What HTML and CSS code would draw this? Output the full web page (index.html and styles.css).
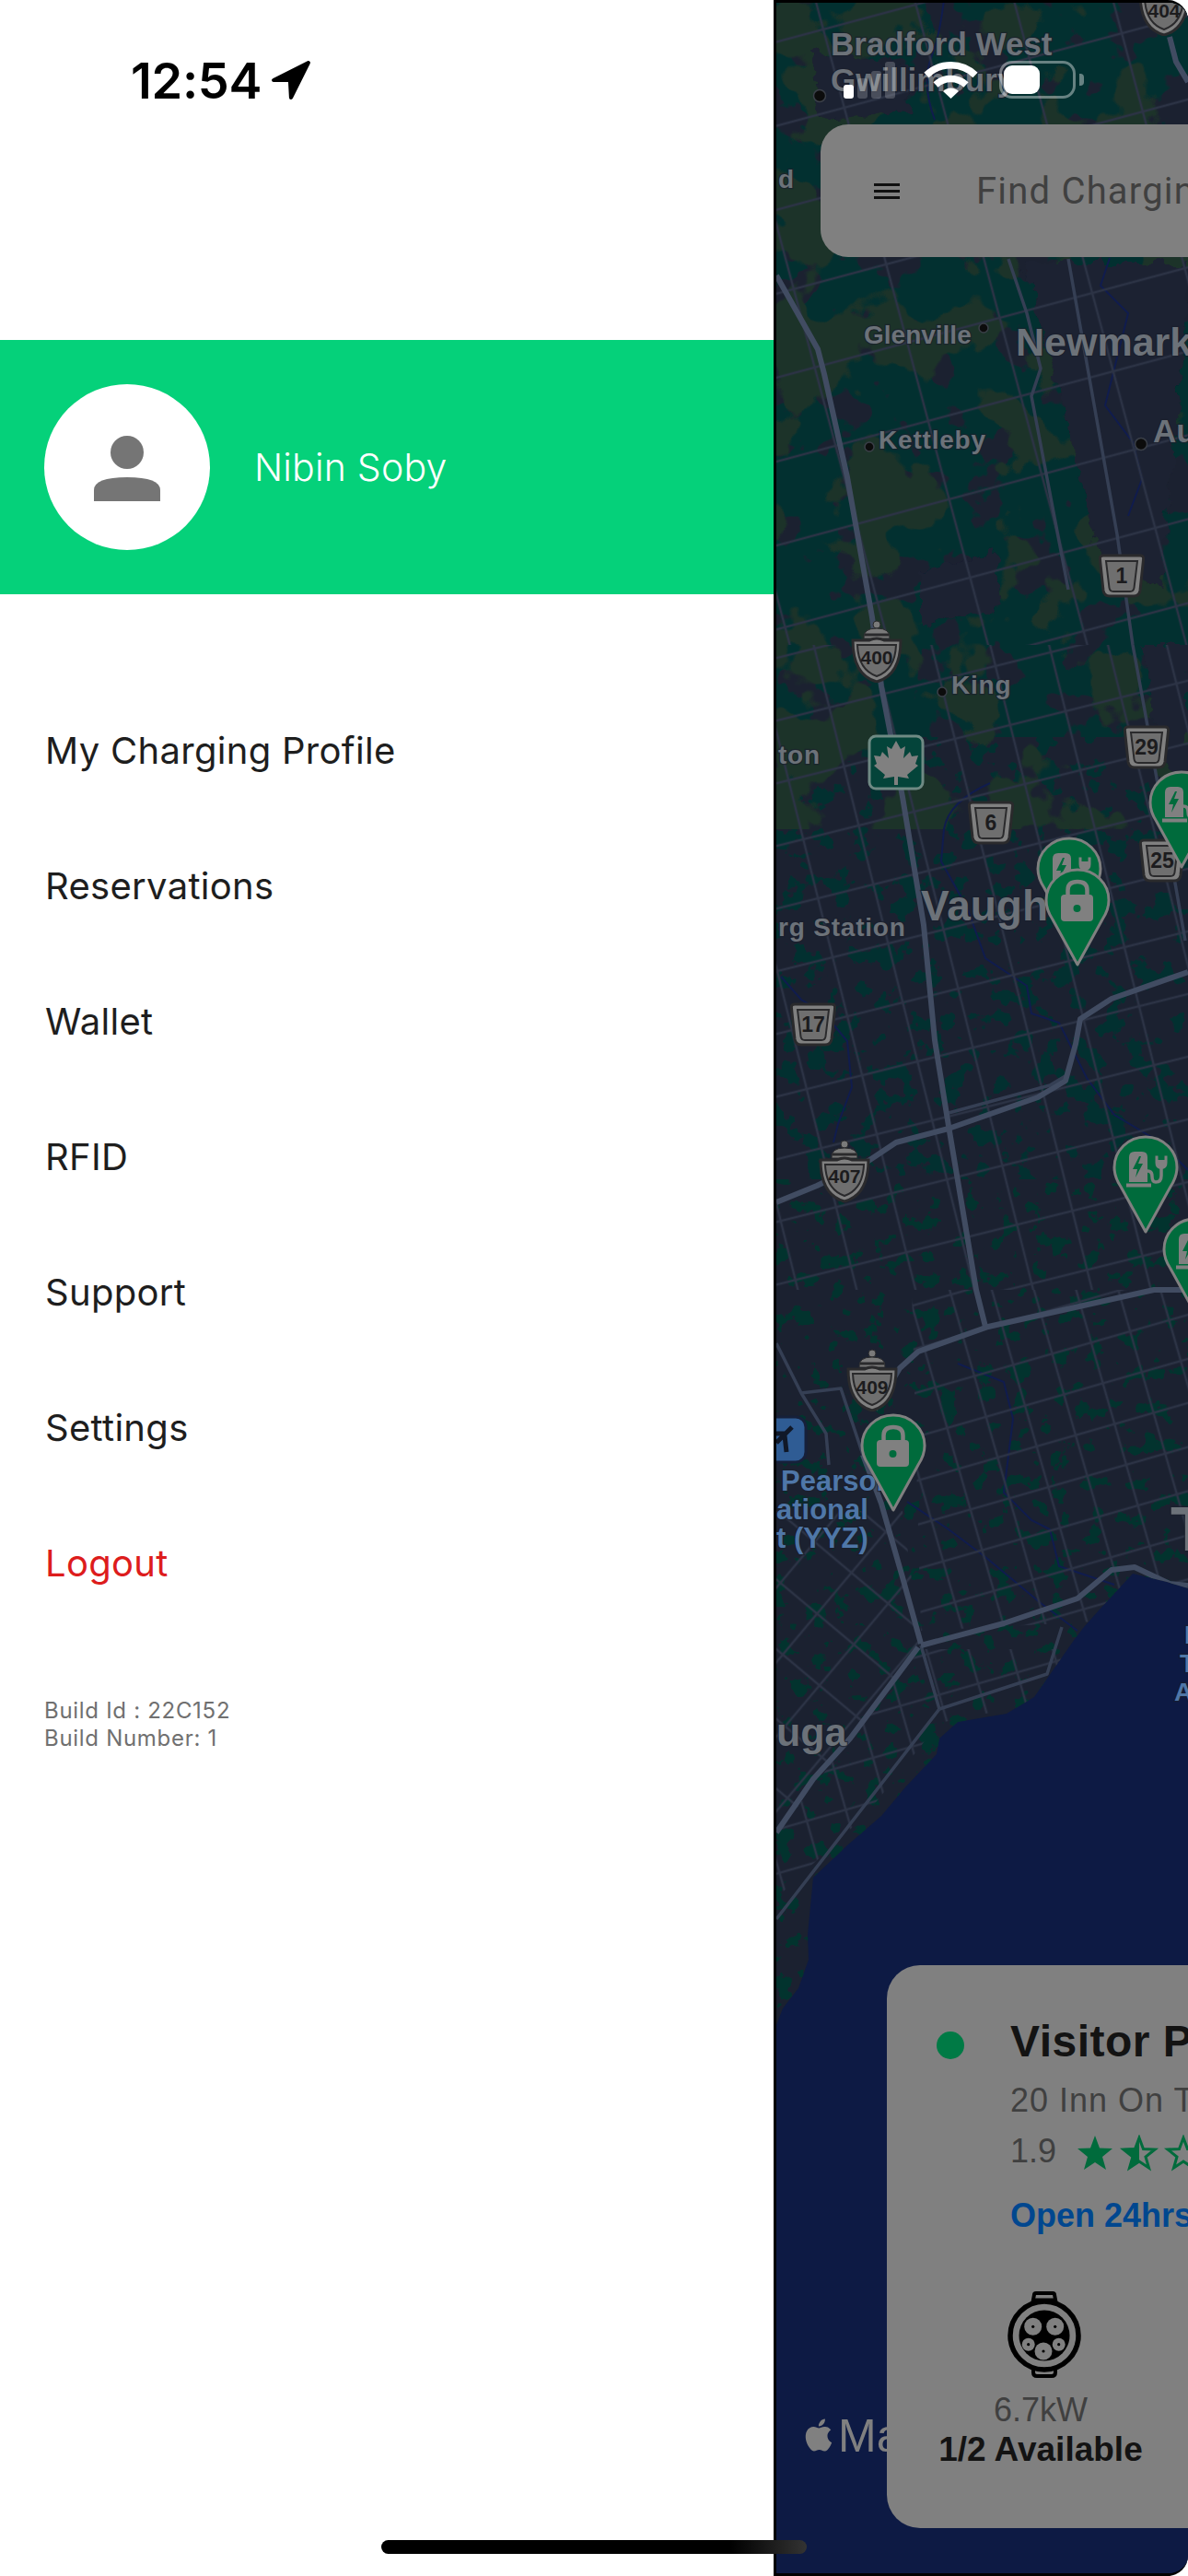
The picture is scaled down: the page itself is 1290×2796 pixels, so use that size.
FILE: index.html
```html
<!DOCTYPE html>
<html lang="en">
<head>
<meta charset="utf-8">
<title>Drawer</title>
<link rel="stylesheet" href="styles.css">
</head>
<body>
<div class="screen">
  <aside class="drawer">
    <div class="status-left">
      <span class="time">12:54</span>
      <svg class="loc" viewBox="0 0 42 42"><path d="M39 3 L3 21 L20 21 L21 39 Z"/></svg>
    </div>
    <header class="profile">
      <div class="avatar">
        <svg class="avatar-icon" viewBox="0 0 72 71"><ellipse cx="36" cy="18" rx="18" ry="18"/><path d="M0 71 V59 Q0 45 36 45 Q72 45 72 59 V71 Z"/></svg>
      </div>
      <span class="name">Nibin Soby</span>
    </header>
    <nav class="menu">
      <a class="item">My Charging Profile</a>
      <a class="item">Reservations</a>
      <a class="item">Wallet</a>
      <a class="item">RFID</a>
      <a class="item">Support</a>
      <a class="item">Settings</a>
      <a class="item logout">Logout</a>
    </nav>
    <div class="build">Build Id : 22C152<br>Build Number: 1</div>
  </aside>

  <main class="map">
    <svg class="map-art" viewBox="843 3 447 2790" preserveAspectRatio="none">
      <defs>
        <filter id="tealNorth" x="0" y="0" width="100%" height="100%" color-interpolation-filters="sRGB">
          <feTurbulence type="fractalNoise" baseFrequency="0.02" numOctaves="4" seed="7"/>
          <feColorMatrix values="0 0 0 0 0.008  0 0 0 0 0.19  0 0 0 0 0.19  30 0 0 0 -12"/>
        </filter>
        <filter id="tealMid" x="0" y="0" width="100%" height="100%" color-interpolation-filters="sRGB">
          <feTurbulence type="fractalNoise" baseFrequency="0.04" numOctaves="4" seed="7"/>
          <feColorMatrix values="0 0 0 0 0.008  0 0 0 0 0.19  0 0 0 0 0.19  30 0 0 0 -17.300"/>
        </filter>
        <filter id="tealSouth" x="0" y="0" width="100%" height="100%" color-interpolation-filters="sRGB">
          <feTurbulence type="fractalNoise" baseFrequency="0.05" numOctaves="4" seed="11"/>
          <feColorMatrix values="0 0 0 0 0.008  0 0 0 0 0.2  0 0 0 0 0.18  30 0 0 0 -18.300"/>
        </filter>
        <filter id="moss" x="0" y="0" width="100%" height="100%" color-interpolation-filters="sRGB">
          <feTurbulence type="fractalNoise" baseFrequency="0.012" numOctaves="4" seed="23"/>
          <feColorMatrix values="0 0 0 0 0.11  0 0 0 0 0.2  0 0 0 0 0.16  30 0 0 0 -16.200"/>
        </filter>
        <filter id="rough" x="-10%" y="-10%" width="120%" height="120%">
          <feTurbulence type="fractalNoise" baseFrequency="0.06" numOctaves="3" seed="3"/>
          <feDisplacementMap in="SourceGraphic" scale="22" xChannelSelector="R" yChannelSelector="G"/>
        </filter>
        <pattern id="gridA" width="104" height="88" patternUnits="userSpaceOnUse" patternTransform="rotate(-15 843 0)">
          <path d="M0 44 H104 M52 0 V88" class="grid-line"/>
        </pattern>
        <pattern id="gridB" width="62" height="66" patternUnits="userSpaceOnUse" patternTransform="rotate(-14 843 0)">
          <path d="M0 33 H62 M31 0 V66" class="grid-line"/>
        </pattern>
        <pattern id="gridC" width="44" height="46" patternUnits="userSpaceOnUse" patternTransform="rotate(-16 843 0)">
          <path d="M0 23 H44 M22 0 V46" class="grid-line"/>
        </pattern>
        <pattern id="gridD" width="52" height="58" patternUnits="userSpaceOnUse" patternTransform="rotate(40 843 1700)">
          <path d="M0 29 H52 M26 0 V58" class="grid-line"/>
        </pattern>
        <clipPath id="land"><path d="M843 0 H1290 V1724 L1267 1717 L1230 1708 L1193 1748 L1177 1766 L1167 1779 L1123 1842 L1093 1860 L1040 1869 L1020 1887 L1017 1904 L983 1940 L957 1971 L920 2003 L883 2038 L877 2100 L878 2127 L867 2158 L850 2180 L843 2198 Z"/></clipPath>

        <symbol id="prov" viewBox="0 0 52 48">
          <path d="M6 2 H46 Q50 2 49.600 6 L46 40 Q45 46 39 46 H13 Q7 46 6 40 L2.400 6 Q2 2 6 2Z" class="sign-face"/>
          <path d="M9 8 H43 L39.500 37 Q39 41 35 41 H17 Q13 41 12.500 37 Z" class="sign-inner"/>
        </symbol>
        <symbol id="crown" viewBox="0 0 56 68">
          <circle cx="28" cy="5" r="4" class="crown-fill"/>
          <path d="M14 20 Q13 9 28 9 Q43 9 42 20 Z" class="crown-fill"/>
          <path d="M15 16 H41" class="crown-line"/>
          <path d="M2 22 H20 Q24 20 28 20 Q32 20 36 22 H54 Q54 60 28 67 Q2 60 2 22Z" class="sign-face"/>
          <path d="M7 27 H49 Q48 54 28 61 Q8 54 7 27Z" class="sign-inner"/>
        </symbol>
        <symbol id="pin" viewBox="0 0 72 108">
          <path d="M36 2 C55 2 70 17 70 35 C70 43 67 50 63 56 L36 105 L9 56 C5 50 2 43 2 35 C2 17 17 2 36 2Z" class="pin-body"/>
        </symbol>
        <symbol id="pinCharge" viewBox="0 0 72 108">
          <use href="#pin"/>
          <path d="M18 24 Q18 18 24 18 H32 Q38 18 38 24 V51 H18 Z" class="pin-glyph"/>
          <path d="M15 52.500 H42 V56.500 H15 Z" class="pin-glyph"/>
          <path d="M29 23 L22 37 H27 L25 46 L33 31 H28 L31 23 Z" class="pin-bolt"/>
          <path d="M38 39 Q43 39 43 45 Q43 51 47 51 Q53 51 53 44 V36" class="pin-cable"/>
          <path d="M48 27 V22.500 M58 27 V22.500" class="pin-prong"/>
          <path d="M46.500 27 H59.500 V30 Q59.500 37 53 37 Q46.500 37 46.500 30 Z" class="pin-glyph"/>
        </symbol>
        <symbol id="pinLock" viewBox="0 0 72 108">
          <use href="#pin"/>
          <path d="M24 31 V24 Q24 15 34.500 15 Q45 15 45 24 V31" class="pin-shackle" transform="translate(1.500 0)"/>
          <rect x="18" y="29" width="35" height="29" rx="4" class="pin-glyph"/>
          <circle cx="35.500" cy="44" r="4" class="pin-bolt"/>
        </symbol>
      </defs>

      <rect x="843" y="0" width="447" height="2796" class="water"/>
      <g clip-path="url(#land)">
        <rect x="843" y="0" width="447" height="2200" class="urban"/>
        <rect x="843" y="0" width="447" height="800" filter="url(#tealNorth)"/>
        <rect x="843" y="800" width="447" height="480" filter="url(#tealMid)"/>
        <rect x="843" y="1280" width="447" height="920" filter="url(#tealSouth)"/>
        <rect x="843" y="0" width="447" height="900" filter="url(#moss)"/>
        <g filter="url(#rough)" class="urban">
          <path d="M880 55 L985 70 L990 125 L890 130 Z"/>
          <path d="M1110 285 H1290 V330 L1260 640 L1190 600 L1150 420 Z"/>
          <path d="M1000 620 L1080 600 L1090 660 L1000 680 Z"/>
          <path d="M1240 700 H1290 V850 L1260 820 Z"/>
        </g>

        <g class="river">
          <path d="M1025 0 Q1020 40 1012 60 Q1000 90 1015 130"/>
          <path d="M1205 280 L1195 310 L1225 340 L1200 440 L1230 480 L1240 520 L1225 560"/>
          <path d="M1075 850 Q1030 870 1025 900 L1022 935 L1050 985 L1070 1040 L1115 1070 L1120 1100 L1150 1110 L1180 1170 L1210 1210 L1260 1240 L1290 1270"/>
          <path d="M848 1060 L870 1085 L895 1100 L920 1130 L925 1180 L910 1220 L905 1240"/>
          <path d="M1040 1480 L1090 1500 L1100 1540 L1090 1620 L1120 1650 L1140 1660 L1150 1700 L1210 1720"/>
          <path d="M985 1630 L1030 1660 L1070 1690 L1130 1740 L1170 1770"/>
        </g>

        <rect x="843" y="0" width="447" height="700" fill="url(#gridA)"/>
        <rect x="843" y="700" width="447" height="700" fill="url(#gridB)"/>
        <path d="M990 1400 H1290 V1720 L1190 1760 L1000 1770 Z" fill="url(#gridC)"/>
        <path d="M843 1640 L980 1640 L1000 1790 L883 1940 L843 1990 Z" fill="url(#gridD)"/>
        <path d="M1000 1790 H1160 L1120 1850 L1020 1870 L940 1970 L843 2060 V1990 Z" fill="url(#gridC)"/>

        <g class="road-mid">
          <path d="M1160 281 L1213 580 L1230 700 L1243 771 L1287 1021"/>
          <path d="M1000 1786 L1020 1855 M1020 1855 L843 2083"/>
          <path d="M1020 1855 L1137 1817 L1153 1766"/>
          <path d="M1030 1208 L1140 1178 L1160 1166"/>
          <path d="M843 1458 L870 1512 L897 1556 L900 1590"/>
          <path d="M870 1512 L913 1507 L937 1579"/>
          <path d="M1095 281 L1115 340 L1130 400 L1120 430 L1160 640"/>
        </g>
        <g class="road-major">
          <path d="M843 299 L888 379 L895 406 L920 518 L947 670 L957 745 L980 865 L1003 1004 L1015 1129 L1030 1222 L1060 1400 L1070 1440"/>
          <path d="M1270 40 L1277 67 L1290 89"/>
          <path d="M1290 1400 L1253 1400 L1073 1440 L997 1467 L977 1485 L950 1530"/>
          <path d="M937 1579 L957 1632 L980 1712 L1000 1784"/>
          <path d="M1000 1786 L1090 1762 L1170 1735 L1207 1704 L1232 1701 L1270 1719 L1290 1721"/>
          <path d="M997 1788 L923 1887 L883 1931 L843 1989"/>
          <path d="M843 1305 L887 1287 L943 1260 L973 1240 L1030 1225 L1127 1191 L1157 1173 L1168 1133 L1173 1106 L1207 1084 L1290 1055"/>
        </g>
      </g>

      <g class="map-label">
        <text x="902" y="60" class="l34">Bradford West</text>
        <text x="902" y="99" class="l34">Gwillimbury</text>
        <text x="845" y="204" class="l28">d</text>
        <text x="938" y="373" class="l28">Glenville</text>
        <text x="1103" y="386" class="l40">Newmark</text>
        <text x="954" y="487" class="l28 sp">Kettleby</text>
        <text x="1252" y="480" class="l34">Au</text>
        <text x="1033" y="753" class="l28 sp">King</text>
        <text x="845" y="829" class="l28 sp">ton</text>
        <text x="845" y="1016" class="l28 sp">rg Station</text>
        <text x="1000" y="999" class="l46">Vaugh</text>
        <text x="843" y="1895" class="l42">uga</text>
        <text x="1271" y="1683" class="l68">T</text>
      </g>
      <g class="map-label blue">
        <text x="848" y="1618" class="l30">Pearson</text>
        <text x="843" y="1649" class="l30">ational</text>
        <text x="843" y="1680" class="l30">t (YYZ)</text>
        <text x="1286" y="1784" class="l28">I</text>
        <text x="1281" y="1815" class="l28">T</text>
        <text x="1275" y="1846" class="l28">A</text>
      </g>

      <g class="place-dot">
        <circle cx="890" cy="104" r="6.500"/>
        <circle cx="1068" cy="356" r="5"/>
        <circle cx="944" cy="485" r="5"/>
        <circle cx="1239" cy="482" r="6.500"/>
        <circle cx="1023" cy="751" r="5"/>
      </g>

      <use href="#crown" x="1236" y="-29" width="56" height="68"/>
      <text x="1264" y="19" class="sign-num s3">404</text>
      <use href="#prov" x="1192" y="601" width="52" height="48"/>
      <text x="1218" y="633" class="sign-num s2">1</text>
      <use href="#crown" x="924" y="673" width="56" height="68"/>
      <text x="952" y="721" class="sign-num s3">400</text>
      <use href="#prov" x="1219" y="787" width="52" height="48"/>
      <text x="1245" y="819" class="sign-num s2">29</text>
      <use href="#prov" x="1050" y="869" width="52" height="48"/>
      <text x="1076" y="901" class="sign-num s2">6</text>
      <use href="#prov" x="1236" y="910" width="52" height="48"/>
      <text x="1262" y="942" class="sign-num s2">25</text>
      <use href="#prov" x="857" y="1088" width="52" height="48"/>
      <text x="883" y="1120" class="sign-num s2">17</text>
      <use href="#crown" x="889" y="1237" width="56" height="68"/>
      <text x="917" y="1284" class="sign-num s3">407</text>
      <use href="#crown" x="919" y="1464" width="56" height="68"/>
      <text x="947" y="1513" class="sign-num s3">409</text>

      <rect x="944" y="799" width="58" height="57" rx="7" class="maple-box"/>
      <path transform="translate(943 798)" class="maple" d="M30 6 L35 15 L40 12 L38 25 L45 18 L47 23 L54 22 L51 31 L54 33 L42 43 L44 47 L32 45 L32 54 L28 54 L28 45 L16 47 L18 43 L6 33 L9 31 L6 22 L13 23 L15 18 L22 25 L20 12 L25 15 Z"/>

      <rect x="830" y="1538" width="45" height="49" rx="11" class="airport"/>
      <path d="M843 1566 L860 1549 M840 1556 L853 1556 M852 1558 L854 1576" class="plane"/>

      <use href="#pinCharge" x="1125" y="908" width="72" height="108"/>
      <use href="#pinLock" x="1134" y="942" width="72" height="108"/>
      <use href="#pinCharge" x="1247" y="836" width="72" height="108"/>
      <use href="#pinCharge" x="1208" y="1232" width="72" height="108"/>
      <use href="#pinCharge" x="1262" y="1321" width="72" height="108"/>
      <use href="#pinLock" x="934" y="1534" width="72" height="108"/>

      <path transform="translate(868 2622) scale(1.75)" class="apple" d="M18.71 19.5c-.83 1.24-1.71 2.45-3.05 2.47-1.34.03-1.77-.79-3.29-.79-1.53 0-2 .77-3.27.82-1.31.05-2.3-1.32-3.14-2.53C4.25 17 2.94 12.45 4.7 9.39c.87-1.52 2.43-2.48 4.12-2.51 1.28-.02 2.5.87 3.29.87.78 0 2.26-1.07 3.81-.91.65.03 2.47.26 3.64 1.98-.09.06-2.17 1.28-2.15 3.81.03 3.02 2.65 4.03 2.68 4.04-.03.07-.42 1.44-1.38 2.83M13 3.5c.73-.83 1.94-1.46 2.94-1.5.13 1.17-.34 2.35-1.04 3.19-.69.85-1.83 1.51-2.95 1.42-.15-1.15.41-2.35 1.05-3.11z"/>
      <text x="910" y="2661" class="maps-word">Ma</text>
    </svg>

    <div class="status-right">
      <div class="signal"><i class="bar on"></i><i class="bar b2"></i><i class="bar b3"></i><i class="bar b4"></i></div>
      <svg class="wifi" viewBox="0 0 59 41"><path d="M3 15.500 A38 38 0 0 1 56 15.500" class="wifi-arc"/><path d="M13 26 A24 24 0 0 1 46 26" class="wifi-arc"/><path d="M21 33 A12 12 0 0 1 38 33 L29.500 41 Z" class="wifi-dot"/></svg>
      <div class="battery"><div class="level"></div></div>
      <div class="nib"></div>
    </div>

    <div class="search">
      <svg class="burger" viewBox="0 0 28 17"><path d="M0 1.500 H28 M0 8.500 H28 M0 15.500 H28"/></svg>
      <span class="search-text">Find Chargin</span>
    </div>

    <section class="card">
      <div class="card-top">
        <span class="dot"></span>
        <div class="card-info">
          <div class="title">Visitor P</div>
          <div class="addr">20 Inn On T</div>
          <div class="rating">
            <span class="score">1.9</span>
            <svg class="stars" viewBox="0 0 144 40">
              <path class="star-full" d="M20 1 L25 14.500 L39 15 L28 24 L32 38 L20 30 L8 38 L12 24 L1 15 L15 14.500Z"/>
              <path class="star-empty" d="M68 3.500 L72.500 15.500 L85 16 L75 24 L78.500 36 L68 29 L57.500 36 L61 24 L51 16 L63.500 15.500Z"/>
              <path class="star-full" d="M68 1 V30 L56 38 L60 24 L49 15 L63 14.500Z"/>
              <path class="star-empty" d="M116 3.500 L120.500 15.500 L133 16 L123 24 L126.500 36 L116 29 L105.500 36 L109 24 L99 16 L111.500 15.500Z"/>
            </svg>
          </div>
          <div class="open">Open 24hrs</div>
        </div>
      </div>
      <div class="connector">
        <svg class="plug" viewBox="0 0 80 94">
          <path d="M27 14 L29 3.500 Q29 2 31 2 H49 Q51 2 51 3.500 L53 14" class="plug-tab"/>
          <path d="M29 9 H51" class="plug-tab-in"/>
          <path d="M28 80 V88 Q28 92 32 92 H48 Q52 92 52 88 V80" class="plug-tab"/>
          <circle cx="40" cy="48" r="37" class="plug-ring"/>
          <circle cx="40" cy="48" r="27.500" class="plug-core"/>
          <circle cx="27.700" cy="38.300" r="9.500" class="plug-pin"/><circle cx="27.700" cy="38.300" r="1.600" class="plug-hole"/>
          <circle cx="51.700" cy="38.300" r="9.500" class="plug-pin"/><circle cx="51.700" cy="38.300" r="1.600" class="plug-hole"/>
          <circle cx="22.700" cy="57.700" r="7" class="plug-pin"/><circle cx="22.700" cy="57.700" r="1.600" class="plug-hole"/>
          <circle cx="55.700" cy="57.700" r="7" class="plug-pin"/><circle cx="55.700" cy="57.700" r="1.600" class="plug-hole"/>
          <circle cx="39" cy="65" r="9.500" class="plug-pin"/><circle cx="39" cy="65" r="1.600" class="plug-hole"/>
        </svg>
        <div class="kw">6.7kW</div>
        <div class="avail">1/2 Available</div>
      </div>
    </section>
  </main>
  <div class="home-bar"></div>
</div>
</body>
</html>
```
FILE: styles.css
```css
* { box-sizing: border-box; }
html, body { margin: 0; padding: 0; background: #fff; }
.screen { position: relative; display: flex; width: 1290px; height: 2796px; overflow: hidden; font-family: "Inter", "Liberation Sans", sans-serif; }

/* drawer */
.drawer { width: 840px; flex: none; display: flex; flex-direction: column; background: #fff; }
.status-left { height: 369px; padding: 62px 0 0 142px; display: flex; align-items: flex-start; gap: 10px; }
.time { font-size: 54px; line-height: 52px; font-weight: 600; color: #000; letter-spacing: -0.3px; }
.loc { width: 44px; height: 44px; margin-top: 3px; }
.loc path { fill: #000; stroke: #000; stroke-width: 4; stroke-linejoin: round; }
.profile { height: 276px; background: #05d17a; display: flex; align-items: center; padding-left: 48px; gap: 48px; }
.avatar { width: 180px; height: 180px; border-radius: 50%; background: #fff; display: flex; align-items: center; justify-content: center; }
.avatar-icon { width: 72px; height: 71px; fill: #757575; margin-top: 2px; }
.name { font-size: 41px; line-height: 48px; color: #fff; font-weight: 300; letter-spacing: .2px; }
.menu { display: flex; flex-direction: column; padding-top: 96px; }
.item { height: 147px; display: flex; align-items: center; padding-left: 49px; font-size: 40px; letter-spacing: .3px; color: #1e1e1e; }
.logout { color: #dd1c1c; }
.build { margin: 72px 0 0 48px; font-size: 24px; line-height: 29.500px; color: #707070; letter-spacing: 0.7px; }

/* map */
.map { position: relative; flex: 1; min-width: 0; border: 3px solid #000; border-right-width: 0; border-radius: 0 22px 22px 0; overflow: hidden; background: #0d1a44; }
.map-art { position: absolute; left: 0; top: 0; width: 447px; height: 2790px; display: block; }
.water { fill: #0d1a44; }
.urban { fill: #1b2130; }
.grid-line { fill: none; stroke: #2c3345; stroke-width: 2.500; }
.river { fill: none; stroke: #101c4e; stroke-width: 2; }
.road-major { fill: none; stroke: #414c62; stroke-width: 6; stroke-linejoin: round; }
.road-mid { fill: none; stroke: #353f54; stroke-width: 3.500; stroke-linejoin: round; }
.map-label text { font-family: "Liberation Sans", Arial, sans-serif; font-weight: 700; fill: #6c7279; stroke: #1a1f2c; stroke-width: 2.500; paint-order: stroke; stroke-opacity: .7; }
.map-label.blue text { fill: #4f77a8; }
.l28 { font-size: 28px; }
.l28.sp { letter-spacing: 0.800px; }
.l30 { font-size: 31px; }
.l34 { font-size: 35px; }
.l40 { font-size: 43px; }
.l42 { font-size: 43px; }
.l46 { font-size: 46px; }
.l68 { font-size: 68px; }
.place-dot circle { fill: #0c0c0c; stroke: #3a3f48; stroke-width: 1.500; }
.sign-face { fill: #808080; stroke: #2a2a2c; stroke-width: 3; }
.sign-inner { fill: #6f6f6f; stroke: #2a2a2c; stroke-width: 2; }
.crown-fill { fill: #7a7a7a; stroke: #2a2a2c; stroke-width: 1; }
.crown-line { stroke: #2a2a2c; stroke-width: 3; fill: none; }
.sign-num { font-family: "Liberation Sans", Arial, sans-serif; font-weight: 700; fill: #1c1c1e; text-anchor: middle; }
.s2 { font-size: 23px; }
.s3 { font-size: 21px; }
.maple-box { fill: #04443a; stroke: #6f8a84; stroke-width: 3; }
.maple { fill: #808080; }
.airport { fill: #2f5c94; stroke: #16203a; stroke-width: 3; }
.plane { fill: none; stroke: #101828; stroke-width: 5; }
.pin-body { fill: #006b3c; stroke: #808080; stroke-width: 3; stroke-linejoin: round; }
.pin-glyph { fill: #808080; }
.pin-bolt { fill: #006b3c; }
.pin-cable { fill: none; stroke: #808080; stroke-width: 3.500; }
.pin-prong { fill: none; stroke: #808080; stroke-width: 3; }
.pin-shackle { fill: none; stroke: #808080; stroke-width: 4.500; }
.apple { fill: #808080; }
.maps-word { font-family: "Liberation Sans", Arial, sans-serif; font-size: 50px; fill: #808080; }

/* status overlay */
.status-right { position: absolute; left: 73px; top: 63px; display: flex; align-items: flex-end; height: 41px; }
.signal { display: flex; align-items: flex-end; gap: 4px; width: 87px; }
.bar { display: block; width: 11px; border-radius: 3px; background: rgba(255,255,255,.2); }
.bar.on { height: 15px; background: #fff; }
.b2 { height: 22px; }
.b3 { height: 30px; }
.b4 { height: 40px; }
.wifi { width: 59px; height: 41px; margin-right: 23px; }
.wifi-arc { fill: none; stroke: #fff; stroke-width: 7.500; }
.wifi-dot { fill: #fff; }
.battery { width: 83px; height: 41px; border: 3px solid rgba(255,255,255,.4); border-radius: 14px; padding: 2px; }
.level { width: 39px; height: 31px; background: #fff; border-radius: 9px; }
.nib { width: 5px; height: 13px; margin: 0 0 14px 4px; border-radius: 0 4px 4px 0; background: rgba(255,255,255,.4); }

/* search */
.search { position: absolute; left: 48px; top: 132px; width: 700px; height: 144px; border-radius: 30px; background: #808080; display: flex; align-items: center; padding-left: 58px; gap: 83px; }
.burger { width: 28px; height: 17px; flex: none; }
.burger path { stroke: #111; stroke-width: 3; fill: none; }
.search-text { font-family: "Roboto", sans-serif; font-size: 40px; color: #404040; letter-spacing: 1.200px; white-space: nowrap; }

/* card */
.card { position: absolute; left: 120px; top: 2130px; width: 700px; height: 611px; border-radius: 36px; background: #808080; padding: 55px 0 0 54px; font-family: "Liberation Sans", Arial, sans-serif; }
.card-top { display: flex; align-items: flex-start; }
.dot { width: 30px; height: 30px; border-radius: 50%; background: #007a45; margin: 17px 50px 0 0; flex: none; }
.card-info { display: flex; flex-direction: column; }
.title { font-size: 48px; line-height: 56px; font-weight: 700; letter-spacing: .5px; color: #131313; white-space: nowrap; }
.addr { margin-top: 6px; font-size: 36px; line-height: 60px; color: #404040; white-space: nowrap; letter-spacing: 1px; }
.rating { display: flex; align-items: center; height: 55px; gap: 22px; margin-top: -3px; }
.score { font-size: 36px; color: #404040; }
.stars { width: 144px; height: 40px; margin-top: 4px; }
.star-full { fill: #006b3c; }
.star-empty { fill: none; stroke: #006b3c; stroke-width: 3; }
.open { margin-top: 8px; font-size: 36px; line-height: 69px; font-weight: 700; color: #00478f; white-space: nowrap; }
.connector { width: 224px; margin-top: 48px; display: flex; flex-direction: column; align-items: center; margin-left: 1px; }
.plug { width: 80px; height: 94px; margin-left: 8px; }
.plug-tab { fill: none; stroke: #000; stroke-width: 4; }
.plug-tab-in { stroke: #000; stroke-width: 3; }
.plug-ring { fill: #808080; stroke: #000; stroke-width: 5.500; }
.plug-core { fill: #000; }
.plug-pin { fill: #808080; }
.plug-hole { fill: #000; }
.kw { font-size: 36px; line-height: 44px; color: #404040; margin-top: 13px; }
.avail { font-size: 37px; line-height: 44px; font-weight: 700; color: #131313; white-space: nowrap; margin-top: -1px; }

.home-bar { position: absolute; left: 414px; top: 2757px; width: 462px; height: 15px; border-radius: 8px; background: linear-gradient(90deg, #000 0, #000 82%, #333 100%); }
```
